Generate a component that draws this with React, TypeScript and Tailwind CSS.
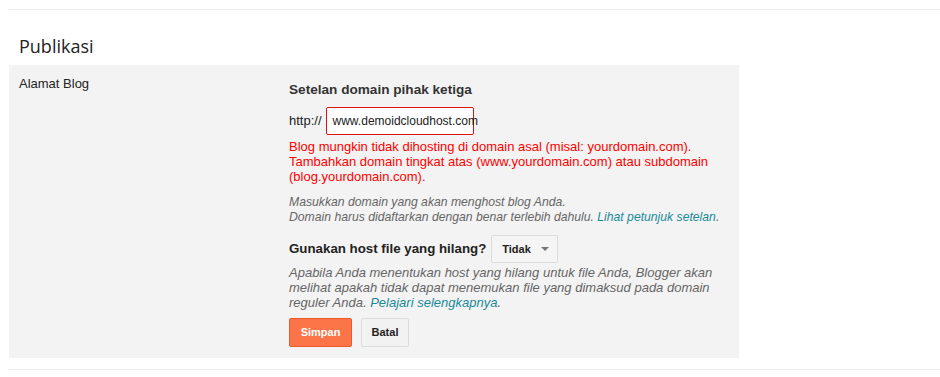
import React from 'react';

export default function App() {
  return (
    <div className="w-[940px] h-[377px] bg-white pl-[9px] pt-[9px] font-['Liberation_Sans',Arial,sans-serif] text-[#222]">
      {/* top divider */}
      <div className="border-t border-[#ebebeb]" />

      {/* section title */}
      <h2 className="pl-[10px] pt-[24px] h-[55px] text-[18px] leading-[24px] font-['Open_Sans',sans-serif] text-[#222]">
        Publikasi
      </h2>

      {/* settings panel */}
      <div className="w-[730px] bg-[#f3f3f3] flex pt-[14px] pb-[11px]">
        <div className="w-[280px] pl-[10px] text-[13px] leading-[16px] -mt-[3px]">Alamat Blog</div>

        <div className="flex-1">
          <h3 className="text-[13.6px] leading-[18px] font-bold text-[#333] pt-[2px]">Setelan domain pihak ketiga</h3>

          <div className="flex items-center mt-[8px] text-[13px]">
            <span className="mr-[4px] text-[#222]">http://</span>
            <div className="w-[148px] h-[28px] bg-white border border-[#dd1111] rounded-[2px] flex items-center pl-[6px] text-[12px] text-[#222]">
              www.<span className="inline-block w-px h-[15px] bg-black" />demoidcloudhost.com
            </div>
          </div>

          <p className="mt-[4px] text-[13px] leading-[15px] text-[#ff0000]">
            Blog mungkin tidak dihosting di domain asal (misal: yourdomain.com).
            <br />
            Tambahkan domain tingkat atas (www.yourdomain.com) atau subdomain
            <br />
            (blog.yourdomain.com).
          </p>

          <p className="mt-[11px] text-[12.2px] leading-[15px] italic text-[#666]">
            Masukkan domain yang akan menghost blog Anda.
            <br />
            Domain harus didaftarkan dengan benar terlebih dahulu.{' '}
            <a href="#" className="text-[#1a8a99]">Lihat petunjuk setelan</a>.
          </p>

          <div className="flex items-center mt-[10px]">
            <span className="text-[13.3px] font-bold text-[#222]">Gunakan host file yang hilang?</span>
            <button className="ml-[5px] w-[67px] h-[28px] bg-[#f5f5f5] border border-[#dcdcdc] rounded-[2px] flex items-center pl-[10px] text-[11px] font-bold text-[#222]">
              Tidak
              <span className="ml-[10px] w-0 h-0 border-l-[4px] border-r-[4px] border-t-[4px] border-l-transparent border-r-transparent border-t-[#777]" />
            </button>
          </div>

          <p className="mt-[2px] text-[13px] leading-[15px] italic text-[#666]">
            Apabila Anda menentukan host yang hilang untuk file Anda, Blogger akan
            <br />
            melihat apakah tidak dapat menemukan file yang dimaksud pada domain
            <br />
            reguler Anda. <a href="#" className="text-[#1a8a99]">Pelajari selengkapnya</a>.
          </p>

          <div className="flex gap-[9px] mt-[8px]">
            <button className="w-[63px] h-[29px] bg-[#fb7548] border border-[#ee5a2c] rounded-[2px] text-white text-[11px] font-bold">
              Simpan
            </button>
            <button className="w-[48px] h-[29px] bg-[#f2f2f2] border border-[#dcdcdc] rounded-[2px] text-[#222] text-[11px] font-bold">
              Batal
            </button>
          </div>
        </div>
      </div>

      {/* bottom divider */}
      <div className="border-t border-[#ebebeb] mt-[11px]" />
    </div>
  );
}
